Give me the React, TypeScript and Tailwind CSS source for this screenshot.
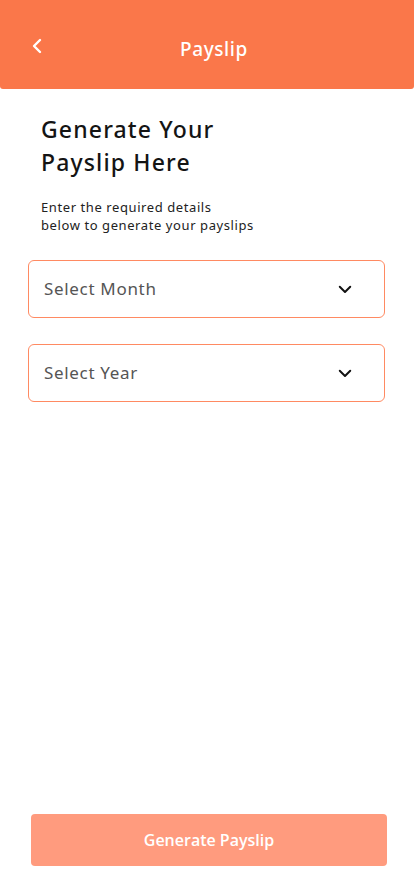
import React from "react";

function Chevron() {
  return (
    <svg width="18" height="18" viewBox="0 0 24 24" fill="none" stroke="#111" strokeWidth="2.6" strokeLinecap="round" strokeLinejoin="round">
      <path d="M5 9l7 7 7-7" />
    </svg>
  );
}

function SelectBox({ label }: { label: string }) {
  return (
    <div className="flex h-[58px] items-center justify-between rounded-[6px] border border-[#FF8A62] pl-[15px] pr-[30px]">
      <span className="text-[17px] tracking-[0.04em] text-[#555555]">{label}</span>
      <Chevron />
    </div>
  );
}

export default function App() {
  return (
    <div className="flex h-[896px] w-[414px] flex-col bg-white" style={{ fontFamily: '"Noto Sans", sans-serif' }}>
      <div className="relative flex h-[89px] items-center justify-center rounded-b-[3px] bg-[#FA774A] pl-[14px] pt-[10px]">
        <svg className="absolute left-[31px] top-[38px]" width="14" height="16" viewBox="0 0 14 16" fill="none" stroke="white" strokeWidth="2.4" strokeLinecap="round" strokeLinejoin="round">
          <path d="M9 2L3 8l6 6" />
        </svg>
        <span className="text-[19px] font-medium tracking-[0.03em] text-white">Payslip</span>
      </div>
      <div className="px-[41px] pt-[24px]">
        <h1 className="text-[23px] font-medium leading-[33px] tracking-[0.05em] text-[#141414]">
          Generate Your
          <br />
          Payslip Here
        </h1>
        <p className="mt-[19px] text-[13px] leading-[18px] tracking-[0.045em] text-[#222]">
          Enter the required details
          <br />
          below to generate your payslips
        </p>
      </div>
      <div className="mt-[26px] flex flex-col gap-[26px] pl-[28px] pr-[29px]">
        <SelectBox label="Select Month" />
        <SelectBox label="Select Year" />
      </div>
      <div className="flex-1" />
      <div className="pb-[30px] pl-[31px] pr-[27px]">
        <button
          className="flex h-[52px] w-full items-center justify-center rounded-[4px] bg-[#FF9B7E] text-[16px] font-semibold text-white"
          style={{ fontFamily: '"Open Sans", sans-serif' }}
        >
          Generate Payslip
        </button>
      </div>
    </div>
  );
}
